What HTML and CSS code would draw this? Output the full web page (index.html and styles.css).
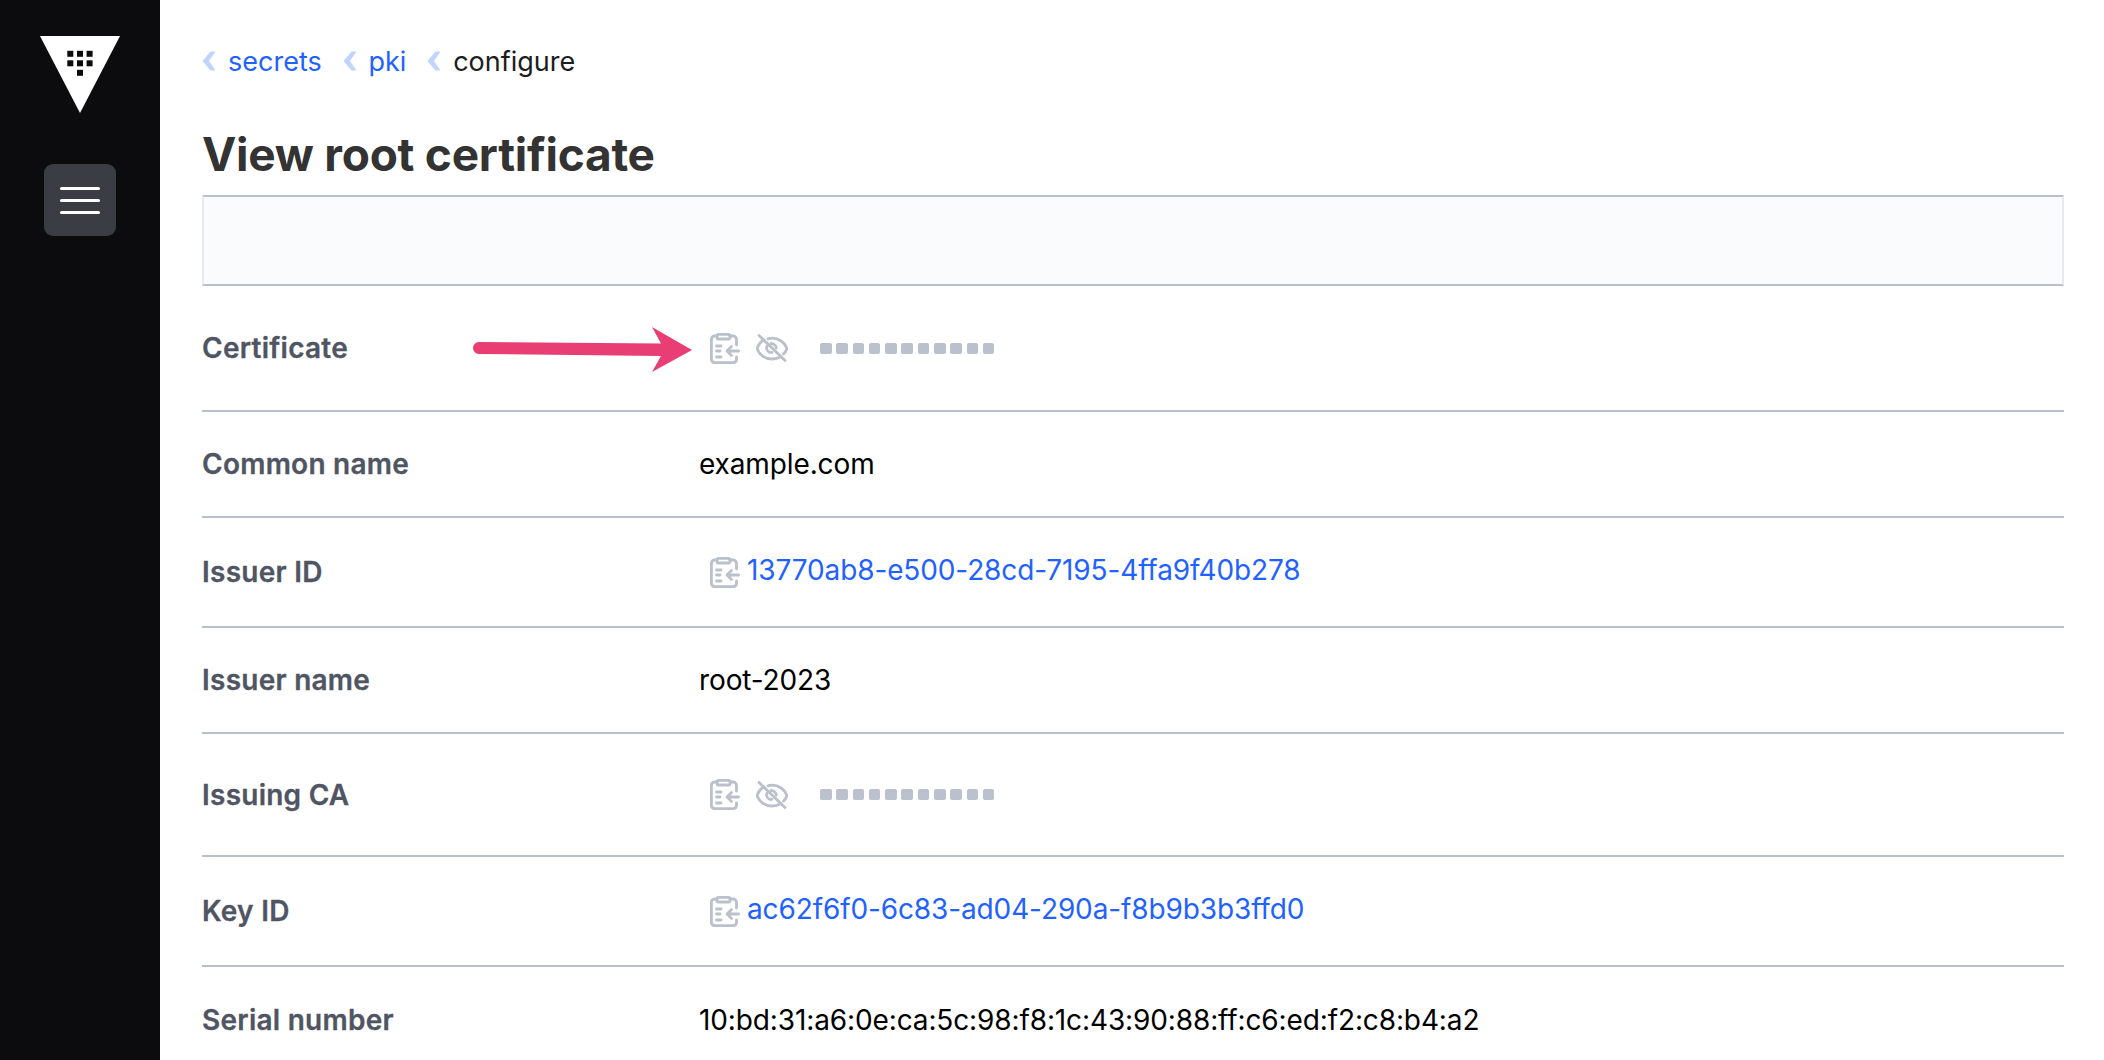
FILE: index.html
```html
<!DOCTYPE html>
<html lang="en">
<head>
<meta charset="utf-8">
<title>View root certificate</title>
<link rel="stylesheet" href="styles.css">
</head>
<body>
<svg class="defs" width="0" height="0" aria-hidden="true">
  <symbol id="clip" viewBox="0 0 30 31">
    <g fill="none" stroke="currentColor" stroke-width="2.800" stroke-linecap="round" stroke-linejoin="round">
      <path d="M7 3H4.500A3.500 3.500 0 0 0 1.400 6.500V26.500A3.500 3.500 0 0 0 4.500 29.600H23A3.500 3.500 0 0 0 26.500 26.500V24M26.500 12V6.500A3.500 3.500 0 0 0 23 3H20"/>
      <rect x="7" y="1.400" width="13" height="4.600" rx="1.500"/>
      <path d="M6.500 13H11M6.500 18H10M6.500 24H11M28.600 18H17M21.500 13.500L17 18L21.500 22.500"/>
    </g>
  </symbol>
  <symbol id="eye" viewBox="0 0 32 28">
    <g fill="none" stroke="currentColor" stroke-width="2.800" stroke-linecap="round" stroke-linejoin="round">
      <path d="M3 1.400L29 26.600"/>
      <path d="M7.500 6C4.500 8 2.500 10.500 1.500 13.500C1.200 14.200 1.200 14.800 1.500 15.500C3.500 21 9 25 16 25C18.500 25 21 24.500 23 23.500"/>
      <path d="M12 4.800C13.300 4.400 14.600 4.200 16 4.200C23 4.200 28.500 8.500 30.500 13.500C30.800 14.200 30.800 14.800 30.500 15.500C30 17.200 28.900 18.700 27.500 20"/>
      <path d="M12 11C10.800 12 10.300 13.500 10.700 15C11.300 17.500 13.800 18.800 16 18.300"/>
      <path d="M15 9.500C17.500 9.500 20 11.500 20.300 14"/>
    </g>
  </symbol>
</svg>

<div class="app">
  <aside class="sidebar">
    <svg class="logo" viewBox="0 0 80 77" width="80" height="77" role="img" aria-label="Vault">
      <polygon class="logo-mark" points="0,0 80,0 40,77"/>
      <g class="logo-keys">
        <rect x="27.300" y="14.800" width="6" height="6"/><rect x="37" y="14.800" width="6" height="6"/><rect x="46.600" y="14.800" width="6" height="6"/>
        <rect x="27.300" y="24.300" width="6" height="6"/><rect x="37" y="24.300" width="6" height="6"/><rect x="46.600" y="24.300" width="6" height="6"/>
        <rect x="37" y="33.800" width="6" height="6"/>
      </g>
    </svg>
    <button class="menu-btn" type="button" aria-label="Menu">
      <span class="bar"></span><span class="bar"></span><span class="bar"></span>
    </button>
  </aside>

  <main class="main">
    <nav class="crumbs">
      <a class="crumb" href="#"><svg class="chev" viewBox="0 0 14 20"><path d="M8.500 0.500L0.500 10L8.500 19.500H13.500L7 10L13.500 0.500Z"/></svg>secrets</a>
      <a class="crumb" href="#"><svg class="chev" viewBox="0 0 14 20"><path d="M8.500 0.500L0.500 10L8.500 19.500H13.500L7 10L13.500 0.500Z"/></svg>pki</a>
      <span class="crumb current"><svg class="chev" viewBox="0 0 14 20"><path d="M8.500 0.500L0.500 10L8.500 19.500H13.500L7 10L13.500 0.500Z"/></svg>configure</span>
    </nav>
    <h1 class="title">View root certificate</h1>
    <div class="toolbar"></div>

    <dl class="rows">
      <div class="row h126">
        <dt>Certificate</dt>
        <dd class="masked">
          <svg class="ic-clip"><use href="#clip"/></svg>
          <svg class="ic-eye"><use href="#eye"/></svg>
          <span class="dots"><i></i><i></i><i></i><i></i><i></i><i></i><i></i><i></i><i></i><i></i><i></i></span>
        </dd>
      </div>
      <div class="row h106"><dt>Common name</dt><dd>example.com</dd></div>
      <div class="row h110">
        <dt>Issuer ID</dt>
        <dd class="copy"><svg class="ic-clip"><use href="#clip"/></svg><a href="#">13770ab8-e500-28cd-7195-4ffa9f40b278</a></dd>
      </div>
      <div class="row h106"><dt>Issuer name</dt><dd>root-2023</dd></div>
      <div class="row h123">
        <dt>Issuing CA</dt>
        <dd class="masked">
          <svg class="ic-clip"><use href="#clip"/></svg>
          <svg class="ic-eye"><use href="#eye"/></svg>
          <span class="dots"><i></i><i></i><i></i><i></i><i></i><i></i><i></i><i></i><i></i><i></i><i></i></span>
        </dd>
      </div>
      <div class="row h110">
        <dt>Key ID</dt>
        <dd class="copy"><svg class="ic-clip"><use href="#clip"/></svg><a href="#">ac62f6f0-6c83-ad04-290a-f8b9b3b3ffd0</a></dd>
      </div>
      <div class="row h106 last"><dt>Serial number</dt><dd>10:bd:31:a6:0e:ca:5c:98:f8:1c:43:90:88:ff:c6:ed:f2:c8:b4:a2</dd></div>
    </dl>

    <svg class="arrow" viewBox="0 0 220 46" width="220" height="46" aria-hidden="true">
      <path d="M6 15L188 16.500L179 0L219 23L179 45L188 29L6 27A6 6 0 0 1 6 15Z"/>
    </svg>
  </main>
</div>
</body>
</html>
```

FILE: styles.css
```css
* { box-sizing: border-box; }
html, body { margin: 0; height: 100%; overflow: hidden; background: #fff; }
body { font-family: Inter, "Liberation Sans", sans-serif; color: #000; }
.defs { position: absolute; }

.app { display: flex; height: 1060px; }

.sidebar {
  width: 160px;
  flex: none;
  background: #0c0c0e;
  display: flex;
  flex-direction: column;
  align-items: center;
  padding-top: 36px;
  gap: 51px;
}
.logo { display: block; }
.logo-mark { fill: #fff; }
.logo-keys { fill: #0c0c0e; }

.menu-btn {
  width: 72px;
  height: 72px;
  border: 0;
  border-radius: 9px;
  background: #3b3d45;
  display: flex;
  flex-direction: column;
  align-items: center;
  justify-content: center;
  gap: 9px;
  padding: 0;
}
.bar { width: 40px; height: 3px; border-radius: 1.500px; background: #fff; }

.main { flex: 1; min-width: 0; padding: 0 40px 0 42px; position: relative; }

.crumbs { display: flex; align-items: center; height: 40px; margin-top: 41px; font-size: 27px; }
.crumb { display: flex; align-items: center; color: #1f62ff; text-decoration: none; margin-right: 20.800px; }
.crumb.current { color: #1b1d22; }
.chev { width: 14px; height: 20px; margin-right: 12px; fill: #bfd4ff; }

.title {
  margin: 45px 0 0;
  font-size: 46px;
  line-height: 56px;
  font-weight: 700;
  color: #333;
  letter-spacing: -0.250px;
}
.toolbar {
  height: 91px;
  margin-top: 13px;
  background: #fafbfc;
  border-top: 2px solid #b9bfcc;
  border-bottom: 2px solid #b9bfcc;
  border-left: 2px solid #e8eaf0;
  border-right: 2px solid #e8eaf0;
}

.rows { margin: 0; }
.row { display: flex; align-items: center; border-bottom: 2px solid #b9bfcc; }
.row.last { border-bottom: 0; }
.h106 { height: 106px; }
.h110 { height: 110px; }
.h123 { height: 123px; }
.h126 { height: 126px; }
dt { width: 497px; flex: none; font-size: 28px; font-weight: 600; letter-spacing: 0.250px; color: #4f5562; -webkit-text-stroke: 0.300px #4f5562; }
dd { margin: 0; font-size: 28px; letter-spacing: -0.120px; display: flex; align-items: center; }
dd a { color: #1f62ff; text-decoration: none; }

.masked, .copy { color: #bac1cc; padding-left: 11px; }
.copy a { margin-left: 7px; position: relative; top: -2px; }
.ic-clip { width: 30px; height: 31px; flex: none; }
.ic-eye { width: 32px; height: 28px; flex: none; margin-left: 16px; }
.dots { display: flex; gap: 4.800px; margin-left: 32px; }
.dots i { width: 11.500px; height: 11px; border-radius: 2px; background: #bac1cc; }

.arrow { position: absolute; left: 313px; top: 327px; fill: #e83e74; }
```
